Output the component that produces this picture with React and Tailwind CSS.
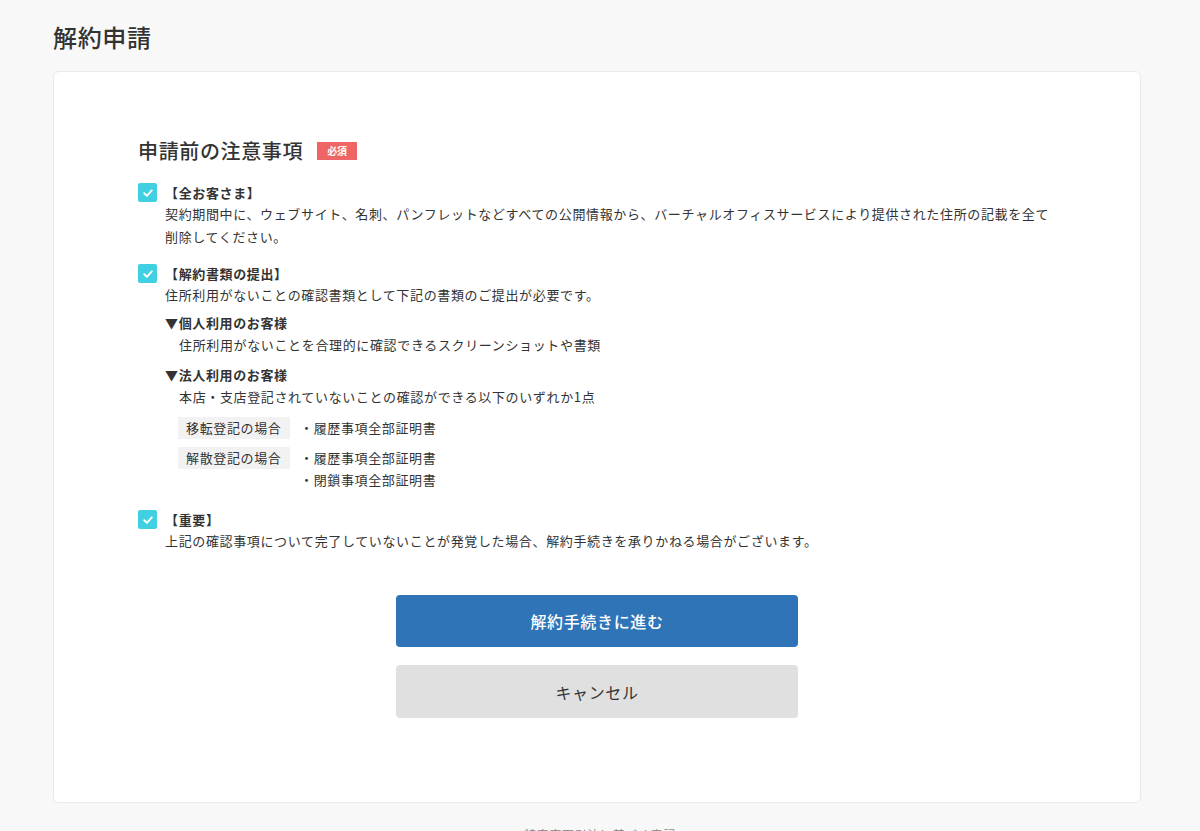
import React from "react";

const font = { fontFamily: '"Noto Sans CJK JP", "Noto Sans", sans-serif' };

function Check() {
  return (
    <span className="flex h-[19px] w-[19px] shrink-0 items-center justify-center rounded-[2px] bg-[#40d0e2]">
      <svg width="12" height="12" viewBox="0 0 12 12" fill="none">
        <path d="M2.2 6.2 L4.9 8.8 L9.8 3.4" stroke="white" strokeWidth="1.9" strokeLinecap="round" strokeLinejoin="round" />
      </svg>
    </span>
  );
}

function Item({ label, children, className = "" }) {
  return (
    <div className={className}>
      <div className="flex h-[19px] items-center gap-[8px]">
        <Check />
        <span className="text-[13px] font-bold leading-[19px] text-[#333]">{label}</span>
      </div>
      <div className="pl-[27px] text-[13px] leading-[23px] text-[#333]">{children}</div>
    </div>
  );
}

export default function App() {
  return (
    <div className="min-h-[831px] bg-[#f8f8f8] tracking-[0.04em] text-[#333]" style={font}>
      <div className="px-[53px] pt-[21px]">
        <h1 className="text-[24px] font-medium leading-[32px] text-[#333]">解約申請</h1>
        <div className="mt-[18px] w-[1088px] rounded-[6px] border border-[#e9e9e9] bg-white pt-[65px] pb-[84px]">
          <div className="px-[84px]">
            <div className="flex items-center gap-[14px]">
              <h2 className="text-[20px] font-medium leading-[28px] text-[#333]">申請前の注意事項</h2>
              <span className="flex h-[18px] w-[40px] items-center justify-center bg-[#ef6464] text-[10px] font-bold leading-none tracking-normal text-white">必須</span>
            </div>

            <Item label="【全お客さま】" className="mt-[18px]">
              契約期間中に、ウェブサイト、名刺、パンフレットなどすべての公開情報から、バーチャルオフィスサービスにより提供された住所の記載を全て
              <br />
              削除してください。
            </Item>

            <Item label="【解約書類の提出】" className="mt-[16px]">
              住所利用がないことの確認書類として下記の書類のご提出が必要です。
              <div className="mt-[6px] leading-[22px]">
                <div className="font-bold">▼個人利用のお客様</div>
                <div className="pl-[14px]">住所利用がないことを合理的に確認できるスクリーンショットや書類</div>
                <div className="mt-[8px] font-bold">▼法人利用のお客様</div>
                <div className="pl-[14px]">本店・支店登記されていないことの確認ができる以下のいずれか1点</div>
                <div className="mt-[9px] flex flex-col gap-[8px] pl-[13px]">
                  <div className="flex items-start gap-[10px]">
                    <span className="w-[112px] bg-[#f2f2f2] px-[8px] leading-[22px]">移転登記の場合</span>
                    <div>・履歴事項全部証明書</div>
                  </div>
                  <div className="flex items-start gap-[10px]">
                    <span className="w-[112px] bg-[#f2f2f2] px-[8px] leading-[22px]">解散登記の場合</span>
                    <div>
                      <div>・履歴事項全部証明書</div>
                      <div>・閉鎖事項全部証明書</div>
                    </div>
                  </div>
                </div>
              </div>
            </Item>

            <Item label="【重要】" className="mt-[19px]">
              上記の確認事項について完了していないことが発覚した場合、解約手続きを承りかねる場合がございます。
            </Item>
          </div>

          <div className="mx-auto mt-[43px] flex w-[402px] flex-col gap-[18px]">
            <button className="h-[52px] w-full rounded-[4px] bg-[#2e74b6] text-[16px] font-medium tracking-[0.04em] text-white">解約手続きに進む</button>
            <button className="h-[53px] w-full rounded-[4px] bg-[#e0e0e0] text-[16px] font-normal tracking-[0.04em] text-[#333]">キャンセル</button>
          </div>
        </div>
        <div className="mt-[24px] pb-[10px] text-center text-[12px] leading-[16px] text-[#888]">
          特定商取引法に基づく表記
        </div>
      </div>
    </div>
  );
}
